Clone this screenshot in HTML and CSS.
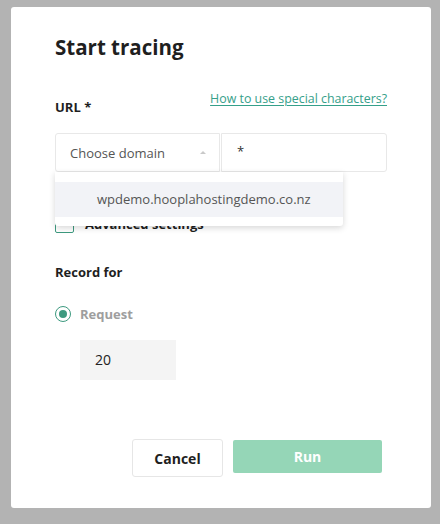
FILE: index.html
```html
<!DOCTYPE html>
<html>
<head>
<meta charset="utf-8">
<link rel="stylesheet" href="styles.css">
</head>
<body>
<div class="modal">
  <h1 class="title">Start tracing</h1>
  <div class="url-row">
    <span class="label url-label">URL *</span>
    <a class="help-link" href="#">How to use special characters?</a>
  </div>
  <div class="fields">
    <div class="select">
      <span class="select-text">Choose domain</span>
      <span class="caret"></span>
      <div class="menu">
        <div class="menu-item">wpdemo.hooplahostingdemo.co.nz</div>
      </div>
    </div>
    <div class="text-input">*</div>
  </div>
  <div class="check-row">
    <span class="checkbox"></span>
    <span class="check-label">Advanced settings</span>
  </div>
  <div class="label record-label">Record for</div>
  <div class="radio-row">
    <span class="radio"><span class="radio-dot"></span></span>
    <span class="radio-label">Request</span>
  </div>
  <div class="number-input">20</div>
  <div class="footer">
    <button class="btn btn-cancel">Cancel</button>
    <button class="btn btn-run">Run</button>
  </div>
</div>
</body>
</html>
```

FILE: styles.css
```css
* { box-sizing: border-box; }

html, body {
  margin: 0;
  padding: 0;
}

body {
  background: #b3b3b3;
  font-family: "Open Sans", "Noto Sans", sans-serif;
  color: #212121;
  width: 440px;
  height: 524px;
  overflow: hidden;
}

.modal {
  margin: 7px 0 0 11px;
  width: 420px;
  height: 501px;
  background: #ffffff;
  border-radius: 3px;
  padding: 26px 44px 0 44px;
}

.title {
  margin: 0;
  font-size: 20.5px;
  line-height: 28px;
  font-weight: 700;
  color: #1f1f1f;
}

.url-row {
  margin-top: 28px;
  display: flex;
  justify-content: space-between;
  align-items: flex-start;
}

.label {
  font-size: 13px;
  line-height: 20px;
  font-weight: 700;
  color: #1f1f1f;
}

.url-label {
  margin-top: 8px;
}

.help-link {
  font-size: 12.4px;
  line-height: 20px;
  color: #35a08a;
  text-decoration: underline;
  text-underline-offset: 2px;
}

.fields {
  margin-top: 16px;
  display: grid;
  grid-template-columns: 165px 166px;
  column-gap: 1px;
}

.select {
  position: relative;
  height: 39px;
  border: 1px solid #e8e8e8;
  border-radius: 3px 0 0 3px;
  display: flex;
  align-items: center;
  justify-content: space-between;
  padding: 0 13px 0 14px;
  font-size: 13px;
  color: #555555;
}

.caret {
  width: 0;
  height: 0;
  border-left: 3px solid transparent;
  border-right: 3px solid transparent;
  border-bottom: 3px solid #c9c9c9;
}

.menu {
  position: absolute;
  top: 100%;
  left: -1px;
  width: 288px;
  margin-top: 1px;
  padding: 10px 0 9px;
  background: #ffffff;
  border-radius: 0 0 3px 3px;
  box-shadow: 0 2px 6px rgba(0, 0, 0, 0.16);
  z-index: 5;
}

.menu-item {
  height: 35px;
  line-height: 35px;
  padding-left: 42px;
  background: #f2f3f7;
  font-size: 13px;
  color: #555555;
}

.text-input {
  height: 39px;
  border: 1px solid #e8e8e8;
  border-radius: 0 3px 3px 0;
  padding: 0 15px;
  font-size: 13px;
  line-height: 35px;
  color: #333333;
}

.check-row {
  margin-top: 43px;
  display: flex;
  align-items: center;
  height: 18px;
}

.checkbox {
  width: 19px;
  height: 18px;
  border: 1.5px solid #3d9a7f;
  border-radius: 2px;
}

.check-label {
  margin-left: 11px;
  font-size: 13px;
  font-weight: 700;
  color: #1f1f1f;
}

.record-label {
  margin-top: 29px;
}

.radio-row {
  margin-top: 24px;
  display: flex;
  align-items: center;
  height: 16px;
}

.radio {
  width: 16px;
  height: 16px;
  border: 1.5px solid #3d9a7f;
  border-radius: 50%;
  display: flex;
  align-items: center;
  justify-content: center;
}

.radio-dot {
  width: 8px;
  height: 8px;
  border-radius: 50%;
  background: #3d9a7f;
}

.radio-label {
  margin-left: 9px;
  font-size: 13px;
  font-weight: 700;
  color: #9e9e9e;
  line-height: 16px;
}

.number-input {
  margin-top: 18px;
  margin-left: 25px;
  width: 96px;
  height: 40px;
  background: #f4f4f4;
  padding-left: 15px;
  font-size: 14px;
  line-height: 40px;
  color: #222222;
}

.footer {
  margin-top: 59px;
  display: flex;
  justify-content: flex-end;
  align-items: flex-start;
  gap: 10px;
  padding-right: 5px;
}

.btn {
  font-family: "Open Sans", "Noto Sans", sans-serif;
  font-size: 14px;
  font-weight: 700;
  border-radius: 3px;
  padding: 0;
  cursor: pointer;
}

.btn-cancel {
  width: 91px;
  height: 38px;
  background: #ffffff;
  border: 1px solid #e6e6e6;
  color: #1f1f1f;
}

.btn-run {
  margin-top: 1px;
  width: 149px;
  height: 33px;
  background: #95d6b7;
  border: none;
  border-radius: 2px;
  color: #ffffff;
}
```
